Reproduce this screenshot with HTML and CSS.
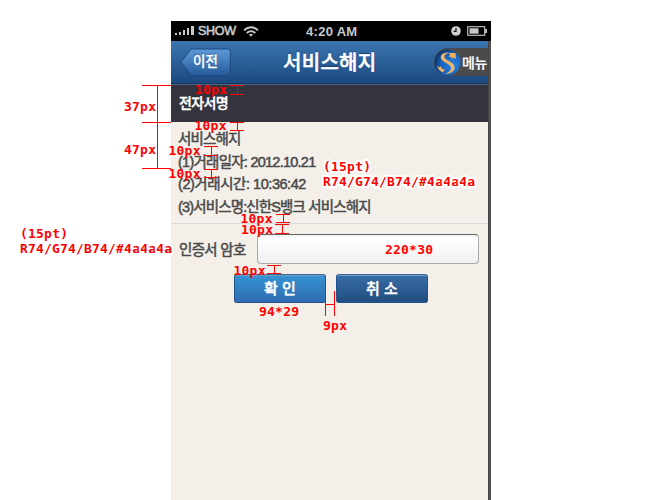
FILE: index.html
```html
<!DOCTYPE html>
<html lang="ko">
<head>
<meta charset="utf-8">
<title>서비스해지</title>
<link rel="stylesheet" href="styles.css">
</head>
<body>
<main class="phone">
  <div class="status">
    <svg class="signal" width="20" height="10" viewBox="0 0 20 10"><path d="M0 7h2v2H0zM4 6h2v3H4zM8 4h2v5H8zM12 2h2v7h-2zM16 0h3v9h-3z" fill="#c8c8c8"/></svg>
    <span class="carrier">SHOW</span>
    <svg class="wifi" width="16" height="11" viewBox="0 0 16 11" fill="none" stroke="#c8c8c8" stroke-width="1.8"><path d="M1 4.3Q8-1.8 15 4.3M3.7 7Q8 3.2 12.3 7"/><path d="M6 8.5Q8 7 10 8.5L8 10.7z" fill="#c8c8c8" stroke="none"/></svg>
    <span class="time">4:20 AM</span>
    <svg class="clock" width="10" height="10" viewBox="0 0 10 10"><circle cx="5" cy="5" r="4.8" fill="#d0d0d0"/><path d="M5 2v3.3H2.7" fill="none" stroke="#111" stroke-width="1.2"/></svg>
    <svg class="battery" width="21" height="10" viewBox="0 0 21 10"><rect x=".7" y=".7" width="17" height="8.6" fill="none" stroke="#bbb" stroke-width="1.2"/><path d="M2.5 2.3h9v5.4h-9z" fill="#c8c8c8"/><path d="M18 3h2v4h-2z" fill="#bbb"/></svg>
  </div>
  <header class="nav">
    <div class="back">
      <svg class="back-shape" width="51" height="29" viewBox="0 0 51 29"><defs><linearGradient id="bk" x2="0" y2="1"><stop stop-color="#5e9bdb"/><stop offset="1" stop-color="#265a99"/></linearGradient></defs><path d="M12.5 1H48Q50.3 1 50.3 3.5V25Q50.3 27.5 48 27.5H12.5Q11 27.5 10 26L.8 14.3 10 2.3Q11 1 12.5 1z" fill="url(#bk)" stroke="#1e487d"/></svg>
      <span class="back-label">이전</span>
    </div>
    <h1 class="title">서비스해지</h1>
    <div class="menu">
      <svg class="logo" width="27" height="27" viewBox="0 0 27 27"><defs><radialGradient id="gl" cx=".68" cy=".6" r=".75"><stop stop-color="#2c86e6"/><stop offset=".6" stop-color="#1660b8"/><stop offset="1" stop-color="#09285d"/></radialGradient></defs><circle cx="13.5" cy="13.5" r="13" fill="url(#gl)"/><path d="M15.500 3.500C9 3 6 6 7 9.500 8 13.500 16.500 14.500 17 18.500 17.300 21.500 14 24 11 24.700 17 25.200 21.500 21.500 20.500 17.500 19.500 13 11.500 11.500 10.500 8.300 10 6 12.500 4.700 15.500 3.500z" fill="#eeb566"/><path d="M15 4L21.500 4 22 10 19.500 8.500 18 10 17.500 8 14.500 7.700 16 6zM3 17L5.500 18.500 7 17 8 20 11 20.500 9 23.500Q5 22 3 17z" fill="#f2b15c"/></svg>
      <span class="menu-label">메뉴</span>
    </div>
  </header>
  <h2 class="section">전자서명</h2>
  <section class="details">
    <p class="kind">서비스해지</p>
    <p class="date">(1)거래일자: 2012.10.21</p>
    <p class="hour">(2)거래시간: 10:36:42</p>
    <p class="name">(3)서비스명:신한S뱅크 서비스해지</p>
  </section>
  <form class="form">
    <label class="field"><span class="field-label">인증서 암호</span><input class="input" type="password"></label>
    <div class="actions">
      <button class="btn ok" type="button">확 인</button>
      <button class="btn" type="button">취 소</button>
    </div>
  </form>
</main>
<svg class="notes" width="650" height="500" viewBox="0 0 650 500">
  <path class="rule" d="M142 85.500H171M142 122.500H171M142 168.500H171M157.500 85V169
    M230 85.500H244M230 94.500H244M237.500 85V94
    M230 122.500H244M230 130.500H244M237.500 122V130
    M204 146.500H218M204 155.500H218M211.500 146V155
    M204 169.500H218M204 177.500H218M211.500 169V177
    M276 214.500H290M276 222.500H290M283.500 214V222
    M275 224.500H289M275 233.500H289M282.500 224V233
    M267 265.500H281M267 273.500H281M274.500 265V273
    M325.500 291V316M334.500 291V316M325 304.500H335"/>
  <text x="124" y="111" textLength="32">37px</text>
  <text x="124" y="154" textLength="32">47px</text>
  <text x="195" y="94" textLength="32">10px</text>
  <text x="194.500" y="130" textLength="32">10px</text>
  <text x="168.500" y="155" textLength="32">10px</text>
  <text x="168.500" y="178" textLength="32">10px</text>
  <text x="240.500" y="223" textLength="32">10px</text>
  <text x="241" y="234" textLength="32">10px</text>
  <text x="233.500" y="275" textLength="32">10px</text>
  <text class="halo" x="323" y="171" textLength="48">(15pt)</text>
  <text class="halo" x="323" y="186" textLength="152">R74/G74/B74/#4a4a4a</text>
  <text x="20" y="238" textLength="48">(15pt)</text>
  <text class="halo" x="20" y="253" textLength="152">R74/G74/B74/#4a4a4a</text>
  <text x="385" y="254" textLength="48">220*30</text>
  <text x="259" y="316" textLength="40">94*29</text>
  <text x="323" y="330" textLength="24">9px</text>
</svg>
</body>
</html>
```
FILE: styles.css
```css
* { box-sizing: border-box; }
body {
  margin: 0;
  width: 650px;
  height: 500px;
  overflow: hidden;
  position: relative;
  background: #fff;
  font-family: "Liberation Sans", "Noto Sans CJK KR", sans-serif;
}
h1, h2, p { margin: 0; }
.phone {
  width: 320px;
  height: 479px;
  margin: 21px 0 0 171px;
  background: linear-gradient(90deg, #f4efe9 317px, #404042 317px, #555 319px);
  display: flex;
  flex-direction: column;
}
.status {
  height: 20px;
  flex: none;
  background: #000;
  color: #c8c8c8;
  display: flex;
  align-items: center;
  padding: 0 4px;
  font-size: 13px;
  font-weight: bold;
}
.signal { margin-right: 3px; }
.carrier { width: 38px; font-size: 12.5px; font-weight: normal; letter-spacing: -.3px; -webkit-text-stroke: .6px #c8c8c8; }
.wifi { margin-left: 7px; }
.time { margin-left: 47px; letter-spacing: .3px; }
.clock { margin-left: auto; margin-right: 6px; }
.battery { margin-right: -1px; }
.nav {
  height: 43px;
  flex: none;
  width: 317px;
  display: flex;
  align-items: center;
  background: linear-gradient(#3c76b0, #1b4980);
  border-bottom: 1px solid #17345b;
  color: #fff;
}
.back { display: grid; width: 51px; margin-left: 9px; padding-top: 1px; }
.back-shape, .back-label { grid-area: 1 / 1; }
.back-label {
  align-self: center;
  padding: 0 0 1px 13px;
  font-size: 13.5px;
  line-height: 18px;
  font-weight: 500;
  -webkit-text-stroke: .3px #fff;
  text-shadow: 0 -1px 1px #1e487d;
}
.title {
  margin-left: 52px;
  padding-top: 2px;
  width: 94px;
  white-space: nowrap;
  font-size: 20px;
  line-height: 28px;
  font-weight: 500;
  letter-spacing: .3px;
  -webkit-text-stroke: .5px #fff;
  text-shadow: 0 -1px 1px #153c6c;
}
.menu {
  margin-left: auto;
  width: 54px;
  height: 28px;
  display: flex;
  align-items: center;
  background: #4b4b4e;
  border-radius: 14px 0 0 14px;
}
.logo { flex: none; }
.menu-label { font-size: 14px; font-weight: 500; margin-left: 1px; white-space: nowrap; letter-spacing: -.3px; -webkit-text-stroke: .2px #fff; }
.section {
  height: 38px;
  flex: none;
  width: 317px;
  padding: 9px 8px 0;
  border-top: 1px solid #4b6684;
  background: #34343e;
  color: #fff;
  font-size: 14px;
  line-height: 18px;
  font-weight: 500;
  letter-spacing: -.6px;
  -webkit-text-stroke: .4px #fff;
}
.details {
  width: 317px;
  height: 102px;
  flex: none;
  padding: 6px 7px 0;
  border-bottom: 1px solid #d9d9d9;
  color: #4a4a4a;
  font-size: 14.5px;
  line-height: 22.500px;
  white-space: nowrap;
  -webkit-text-stroke: .5px #4a4a4a;
}
.kind { letter-spacing: -.85px; }
.date { letter-spacing: -.75px; }
.hour { letter-spacing: -.45px; }
.name { letter-spacing: -.85px; }
.form { width: 317px; padding: 10px 9px 0 8px; }
.field { display: flex; align-items: center; height: 30px; }
.field-label { width: 78px; padding-bottom: 2px; color: #4a4a4a; font-size: 14.5px; letter-spacing: -.7px; white-space: nowrap; -webkit-text-stroke: .5px #4a4a4a; }
.input {
  width: 222px;
  height: 30px;
  border: 1px solid #aaa;
  border-top: 1px solid #666;
  border-radius: 4px;
  background: linear-gradient(#eee, #fff 3px, #f1f1f1);
}
.actions { display: flex; gap: 9px; padding: 10px 0 0 55px; }
.btn {
  width: 92px;
  height: 29px;
  padding: 1px 0 0;
  border: 1px solid #21548c;
  border-top-color: #39699b;
  border-radius: 3px;
  background: linear-gradient(#376da5, #214d80);
  color: #fff;
  font: 500 15px/24px "Liberation Sans", "Noto Sans CJK KR", sans-serif;
  -webkit-text-stroke: .4px #fff;
  box-shadow: inset 0 1px #6e9ac3;
}
.btn + .btn { margin-left: 1px; }
.ok { background: linear-gradient(#3694d2, #2e6bb2); }
.notes { position: absolute; left: 0; top: 0; pointer-events: none; }
.notes text { fill: #f00; font: bold 13px "DejaVu Sans Mono", monospace; }
.notes .halo { stroke: #fff; stroke-width: 4px; stroke-linejoin: round; paint-order: stroke; }
.rule { fill: none; stroke: #f00; stroke-width: 1; }
```
